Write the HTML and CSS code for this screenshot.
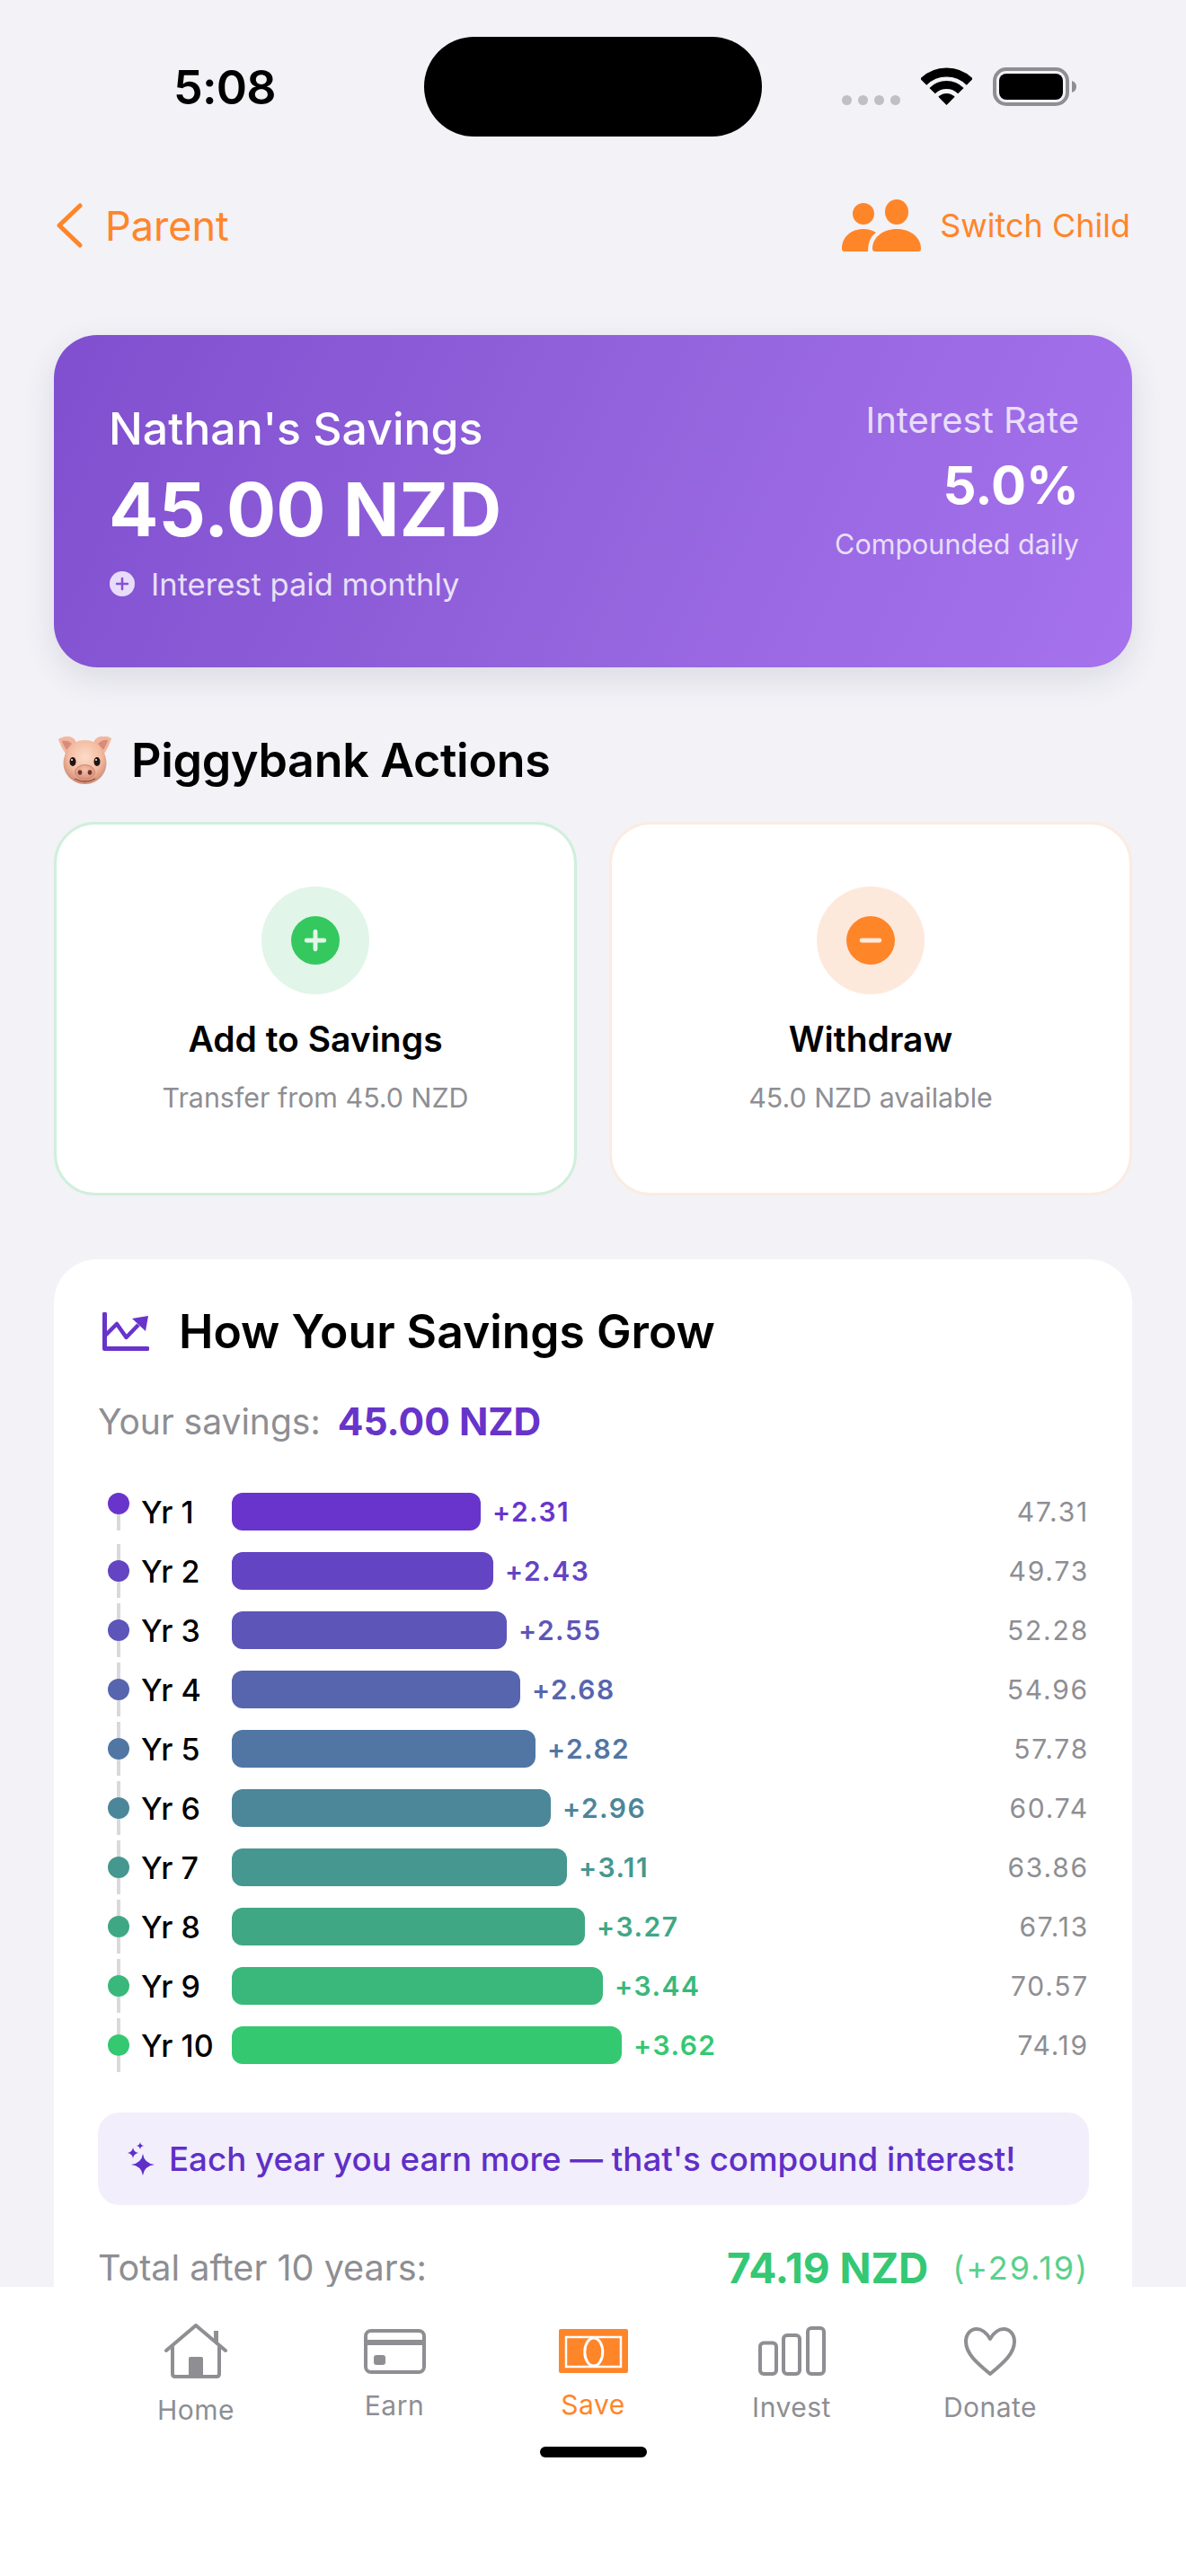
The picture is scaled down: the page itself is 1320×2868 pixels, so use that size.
FILE: index.html
```html
<!DOCTYPE html>
<html lang="en">
<head>
<meta charset="utf-8">
<title>Savings</title>
<link rel="stylesheet" href="styles.css">
</head>
<body>
<div class="phone">
  <div class="scroll">
    <header class="status">
      <span class="time">5:08</span>
      <div class="island"></div>
      <div class="status-icons">
        <div class="signal"><i></i><i></i><i></i><i></i></div>
        <svg class="wifi" viewBox="0 0 57 42"><path d="M2.7 16.2A36.5 36.5 0 0 1 54.3 16.2" fill="none" stroke="#000" stroke-width="10"/><path d="M12.6 26.1A22.5 22.5 0 0 1 44.4 26.1" fill="none" stroke="#000" stroke-width="9"/><path d="M19.3 32.8A13 13 0 0 1 37.7 32.8L28.5 42Z"/></svg>
        <svg class="battery" viewBox="0 0 93 43"><rect x="2" y="2" width="81" height="39" rx="13" fill="none" stroke="#8e8e93" stroke-width="4"/><rect x="7" y="7" width="71" height="29" rx="8"/><path d="M88 15c3 1 5 3 5 6.500s-2 5.500-5 6.500z" fill="#8e8e93"/></svg>
      </div>
    </header>

    <nav class="topnav">
      <div class="back">
        <svg class="chevron" viewBox="0 0 29 50"><path d="M26 3 3 25l23 22" fill="none" stroke="#ff8529" stroke-width="5" stroke-linecap="round" stroke-linejoin="round"/></svg>
        <span>Parent</span>
      </div>
      <div class="switch">
        <svg class="users" viewBox="0 0 88 58"><circle cx="24" cy="16" r="12"/><ellipse cx="61" cy="14" rx="13" ry="14"/><path d="M34 55C34 42 46 33 61 33S88 42 88 55Q88 58 85 58H37Q34 58 34 55Z"/><path d="M0 55C0 42 10 33 24 33C30 33 35 35 38 37C32 41 29 48 29 58H3Q0 58 0 55Z"/></svg>
        <span>Switch Child</span>
      </div>
    </nav>

    <section class="hero">
      <div class="hero-left">
        <div class="hero-name">Nathan's Savings</div>
        <div class="hero-amount">45.00 NZD</div>
        <div class="hero-note">
          <svg class="note-icon" viewBox="0 0 28 28"><circle cx="14" cy="14" r="14" fill="#e8dcfa"/><path d="M14 8v12M8 14h12" stroke="#8452d4" stroke-width="2.500" stroke-linecap="round"/></svg>
          <span>Interest paid monthly</span>
        </div>
      </div>
      <div class="hero-right">
        <div class="rate-label">Interest Rate</div>
        <div class="rate-value">5.0%</div>
        <div class="rate-note">Compounded daily</div>
      </div>
    </section>

    <h2 class="section-title">
      <svg class="pig" viewBox="0 0 59 53">
        <defs>
          <radialGradient id="pigface" cx="50%" cy="38%" r="62%"><stop offset="0" stop-color="#fcdcc9"/><stop offset="0.6" stop-color="#f4bda3"/><stop offset="1" stop-color="#cf8a72"/></radialGradient>
          <radialGradient id="pigsnout" cx="50%" cy="35%" r="70%"><stop offset="0" stop-color="#f6bfa8"/><stop offset="1" stop-color="#d98f7b"/></radialGradient>
        </defs>
        <path d="M0 3C5 0 11-1 15 1 19 3 20 6 20 9L8 19C5 15 2 9 0 3Z" fill="#f2b79f"/>
        <path d="M59 2C54-1 48-1 44 1 40 3 39 6 39 9L51 19C54 15 57 8 59 2Z" fill="#f2b79f"/>
        <path d="M4 5C8 4 12 5 15 8L9 15C7 12 5 8 4 5Z" fill="#d98c7a"/>
        <path d="M55 4C51 3 47 5 44 8L50 15C52 12 54 8 55 4Z" fill="#d98c7a"/>
        <path d="M29.500 4C44 4 51 15 53 25 56 40 44 53 29.500 53S3 40 6 25C8 15 15 4 29.500 4Z" fill="url(#pigface)"/>
        <ellipse cx="16" cy="28" rx="3.500" ry="5" fill="#1f1412"/><ellipse cx="43" cy="28" rx="3.500" ry="5" fill="#1f1412"/>
        <circle cx="15" cy="26" r="1" fill="#fff"/><circle cx="42" cy="26" r="1" fill="#fff"/>
        <ellipse cx="29.500" cy="39.500" rx="11" ry="8" fill="url(#pigsnout)" stroke="#c67e6b" stroke-width="0.800"/>
        <ellipse cx="24" cy="40" rx="2.300" ry="2.800" fill="#6d3529"/><ellipse cx="35" cy="40" rx="2.300" ry="2.800" fill="#6d3529"/>
        <path d="M18 47q11.500 6 23 0" fill="none" stroke="#8f4c3c" stroke-width="1.300"/>
      </svg>
      <span>Piggybank Actions</span>
    </h2>

    <div class="actions">
      <div class="action action-add">
        <div class="action-halo">
          <svg viewBox="0 0 66 66"><circle cx="33" cy="33" r="33" fill="#34c85f"/><path d="M33 21v24M21 33h24" stroke="#e2f6e8" stroke-width="6" stroke-linecap="round"/></svg>
        </div>
        <div class="action-title">Add to Savings</div>
        <div class="action-sub">Transfer from 45.0 NZD</div>
      </div>
      <div class="action action-out">
        <div class="action-halo">
          <svg viewBox="0 0 66 66"><circle cx="33" cy="33" r="33" fill="#ff8529"/><path d="M21 33h24" stroke="#fdeadd" stroke-width="6" stroke-linecap="round"/></svg>
        </div>
        <div class="action-title">Withdraw</div>
        <div class="action-sub">45.0 NZD available</div>
      </div>
    </div>

    <section class="grow">
      <div class="grow-head">
        <svg class="chart-icon" viewBox="0 0 52 43"><path d="M2.500 2v38.500H50" fill="none" stroke="#6734cb" stroke-width="5" stroke-linecap="round" stroke-linejoin="round"/><path d="M3 26 16 13l10.500 15L40 14" fill="none" stroke="#6734cb" stroke-width="4.500" stroke-linejoin="round"/><path d="M33 7 51 4l-3 17z" fill="#6734cb"/></svg>
        <h2>How Your Savings Grow</h2>
      </div>
      <div class="grow-sub"><span>Your savings:</span><strong>45.00 NZD</strong></div>

      <div class="rows">
        <div class="row" style="--c:#6934cc">
          <div class="spine"><i class="dot"></i><i class="line"></i></div>
          <div class="yr">Yr 1</div>
          <div class="bar" style="width:277px"></div><div class="gain">+2.31</div><div class="val">47.31</div>
        </div>
        <div class="row" style="--c:#6344c2">
          <div class="spine"><i class="line"></i><i class="dot"></i><i class="line"></i></div>
          <div class="yr">Yr 2</div>
          <div class="bar" style="width:291px"></div><div class="gain">+2.43</div><div class="val">49.73</div>
        </div>
        <div class="row" style="--c:#5d55b8">
          <div class="spine"><i class="line"></i><i class="dot"></i><i class="line"></i></div>
          <div class="yr">Yr 3</div>
          <div class="bar" style="width:306px"></div><div class="gain">+2.55</div><div class="val">52.28</div>
        </div>
        <div class="row" style="--c:#5765ae">
          <div class="spine"><i class="line"></i><i class="dot"></i><i class="line"></i></div>
          <div class="yr">Yr 4</div>
          <div class="bar" style="width:321px"></div><div class="gain">+2.68</div><div class="val">54.96</div>
        </div>
        <div class="row" style="--c:#5176a4">
          <div class="spine"><i class="line"></i><i class="dot"></i><i class="line"></i></div>
          <div class="yr">Yr 5</div>
          <div class="bar" style="width:338px"></div><div class="gain">+2.82</div><div class="val">57.78</div>
        </div>
        <div class="row" style="--c:#4c8699">
          <div class="spine"><i class="line"></i><i class="dot"></i><i class="line"></i></div>
          <div class="yr">Yr 6</div>
          <div class="bar" style="width:355px"></div><div class="gain">+2.96</div><div class="val">60.74</div>
        </div>
        <div class="row" style="--c:#46978f">
          <div class="spine"><i class="line"></i><i class="dot"></i><i class="line"></i></div>
          <div class="yr">Yr 7</div>
          <div class="bar" style="width:373px"></div><div class="gain">+3.11</div><div class="val">63.86</div>
        </div>
        <div class="row" style="--c:#40a785">
          <div class="spine"><i class="line"></i><i class="dot"></i><i class="line"></i></div>
          <div class="yr">Yr 8</div>
          <div class="bar" style="width:393px"></div><div class="gain">+3.27</div><div class="val">67.13</div>
        </div>
        <div class="row" style="--c:#3ab87b">
          <div class="spine"><i class="line"></i><i class="dot"></i><i class="line"></i></div>
          <div class="yr">Yr 9</div>
          <div class="bar" style="width:413px"></div><div class="gain">+3.44</div><div class="val">70.57</div>
        </div>
        <div class="row" style="--c:#34c871">
          <div class="spine"><i class="line"></i><i class="dot"></i><i class="line"></i></div>
          <div class="yr">Yr 10</div>
          <div class="bar" style="width:434px"></div><div class="gain">+3.62</div><div class="val">74.19</div>
        </div>
      </div>

      <div class="tip">
        <svg class="sparkle" viewBox="0 0 31 37" fill="#5f2fc8"><path d="M18 13q1.500 10.500 13 12-11.500 1.500-13 12-1.500-10.500-13-12 11.500-1.500 13-12Z"/><path d="M7 6q.7 5 6 6-5.300 1-6 6-.7-5-6-6 5.300-1 6-6Z"/><path d="M15 0q.5 3.500 4 4-3.500.5-4 4-.5-3.500-4-4 3.500-.5 4-4Z"/></svg>
        <span>Each year you earn more — that's compound interest!</span>
      </div>

      <div class="total">
        <span class="total-label">Total after 10 years:</span>
        <strong class="total-value">74.19 NZD</strong>
        <span class="total-gain">(+29.19)</span>
      </div>
    </section>
  </div>

  <footer class="tabbar">
    <div class="tabs">
      <div class="tab">
        <svg class="ic-home" viewBox="0 0 70 61"><g fill="none" stroke="#8e8e93" stroke-width="4" stroke-linecap="round" stroke-linejoin="round"><path d="M2 30 35 2l33 28"/><path d="M9 26v30q0 3 3 3h46q3 0 3-3V26"/></g><path d="M55 8h5v16l-5-4z" fill="#8e8e93"/><rect x="27" y="37" width="16" height="22" rx="2" fill="#8e8e93"/></svg>
        <span>Home</span>
      </div>
      <div class="tab">
        <svg class="ic-earn" viewBox="0 0 69 50"><rect x="2" y="2" width="65" height="46" rx="6" fill="none" stroke="#8e8e93" stroke-width="4"/><rect x="2" y="12" width="65" height="6" fill="#8e8e93"/><rect x="11" y="29" width="13" height="11" rx="3" fill="#8e8e93"/></svg>
        <span>Earn</span>
      </div>
      <div class="tab tab-on">
        <svg class="ic-save" viewBox="0 0 77 49"><rect width="77" height="49" rx="2" fill="#ff8529"/><rect x="8" y="9" width="61" height="33" fill="none" stroke="#fff" stroke-width="2.500"/><ellipse cx="38.800" cy="25.500" rx="10" ry="15.500" fill="none" stroke="#fff" stroke-width="3"/></svg>
        <span>Save</span>
      </div>
      <div class="tab">
        <svg class="ic-invest" viewBox="0 0 75 55"><g fill="none" stroke="#8e8e93" stroke-width="4"><rect x="2" y="18.500" width="18" height="34.500" rx="4"/><rect x="28" y="10" width="18" height="43" rx="4"/><rect x="55" y="2" width="18" height="51" rx="4"/></g></svg>
        <span>Invest</span>
      </div>
      <div class="tab">
        <svg class="ic-heart" viewBox="0 0 58 54"><path d="M29 13C25 6 19 2 14 2 7 2 2 8 2 16c0 14 14 25 27 36 13-11 27-22 27-36 0-8-5-14-12-14-5 0-11 4-15 11Z" fill="none" stroke="#8e8e93" stroke-width="4" stroke-linejoin="round"/></svg>
        <span>Donate</span>
      </div>
    </div>
    <div class="home-indicator"></div>
  </footer>
</div>
</body>
</html>
```

FILE: styles.css
```css
* { box-sizing: border-box; }
html, body { margin: 0; padding: 0; }
body { font-family: Inter, "Noto Sans", sans-serif; background: #f2f2f7; color: #000; }
h2 { margin: 0; font: inherit; }
i { display: block; }
svg { display: block; flex: none; }

.phone { width: 1320px; height: 2868px; display: flex; flex-direction: column; overflow: hidden; background: #f2f2f7; }
.scroll { flex: 1; min-height: 0; padding: 0 60px; }

/* status bar */
.status { height: 152px; padding-top: 41px; position: relative; display: flex; }
.time { position: absolute; left: 133px; top: 69px; font-size: 52px; line-height: 58px; font-weight: 600; letter-spacing: -0.8px; }
.island { width: 376px; height: 111px; margin-left: 412px; border-radius: 56px; background: #000; }
.status-icons { margin-left: 89px; padding-top: 34px; display: flex; align-items: flex-start; }
.signal { display: flex; gap: 7px; margin-top: 31px; }
.signal i { width: 11px; height: 11px; border-radius: 50%; background: #bfbfc4; }
.wifi { width: 57px; height: 42px; margin-left: 23px; }
.battery { width: 93px; height: 43px; margin-left: 23px; }

/* nav */
.topnav { margin-top: 70px; height: 58px; display: flex; justify-content: space-between; align-items: center; color: #ff8529; }
.back { display: flex; align-items: center; gap: 25px; margin-left: 3px; font-size: 45px; line-height: 56px; padding-top: 1px; }
.back .chevron { margin-top: -1px; }
.chevron { width: 29px; height: 50px; }
.switch { display: flex; align-items: center; gap: 21px; font-size: 36px; margin-right: 2px; }
.users { width: 88px; height: 58px; fill: #ff8529; }

/* hero */
.hero { margin-top: 93px; height: 370px; padding: 74px 59px 0 61px; border-radius: 48px; display: flex; justify-content: space-between; color: #fff; background: linear-gradient(115deg, #7f4fcf 0%, #9565de 55%, #a672ee 100%); box-shadow: 0 12px 36px rgba(60, 50, 90, 0.12); }
.hero-name { font-size: 50px; line-height: 60px; font-weight: 500; }
.hero-amount { margin-top: 11px; font-size: 82px; line-height: 100px; font-weight: 700; }
.hero-note { margin-top: 10px; height: 44px; padding-left: 1px; display: flex; align-items: center; gap: 18px; font-size: 34.5px; color: rgba(255, 255, 255, 0.82); }
.note-icon { width: 28px; height: 28px; }
.hero-right { text-align: right; }
.rate-label { font-size: 40px; line-height: 46px; margin-top: -2px; color: rgba(255, 255, 255, 0.78); }
.rate-value { margin-top: 14px; font-size: 58px; line-height: 70px; font-weight: 700; }
.rate-note { margin-top: 11px; font-size: 30.5px; line-height: 40px; color: rgba(255, 255, 255, 0.78); }

/* actions */
.section-title { margin-top: 70px; height: 66px; display: flex; align-items: center; gap: 22px; font-size: 52px; font-weight: 600; letter-spacing: -0.3px; padding-left: 5px; }
.pig { width: 59px; height: 53px; }
.actions { margin-top: 36px; display: grid; grid-template-columns: 1fr 1fr; gap: 36px; }
.action { height: 416px; padding-top: 69px; border: 3px solid; border-radius: 46px; background: #fff; display: flex; flex-direction: column; align-items: center; }
.action-add { border-color: #d0efdb; }
.action-out { border-color: #fcebe0; }
.action-halo { width: 120px; height: 120px; border-radius: 50%; display: flex; align-items: center; justify-content: center; }
.action-add .action-halo { background: #e1f5e8; }
.action-out .action-halo { background: #fde9dc; }
.action-halo svg { width: 54px; height: 54px; }
.action-title { margin-top: 25px; font-size: 39px; line-height: 50px; font-weight: 600; }
.action-sub { margin-top: 20px; font-size: 30.4px; line-height: 40px; color: #8e8e93; }

/* growth card runs on under the tab bar */
.grow { margin-top: 71px; padding: 47px 48px 60px 49px; border-radius: 48px; background: #fff; }
.grow-head { display: flex; align-items: center; gap: 33px; height: 66px; padding-left: 5px; }
.chart-icon { width: 52px; height: 43px; }
.grow-head h2 { font-size: 51.6px; font-weight: 600; }
.grow-sub { margin-top: 42px; height: 50px; display: flex; align-items: center; gap: 19px; font-size: 39px; color: #8e8e93; }
.grow-sub strong { font-size: 42.5px; font-weight: 700; color: #6734cb; }
.rows { margin-top: 46px; display: flex; flex-direction: column; gap: 6px; }
.row { height: 60px; display: flex; align-items: center; }
.spine { width: 24px; margin-left: 11px; display: flex; flex-direction: column; align-items: center; }
.line { width: 4px; height: 18px; background: #d9d9dd; }
.dot { width: 24px; height: 24px; border-radius: 50%; background: var(--c); }
.yr { width: 101px; margin-left: 13px; font-size: 34px; font-weight: 500; }
.bar { height: 42px; border-radius: 12px; background: var(--c); }
.gain { margin-left: 13px; font-size: 30px; font-weight: 600; letter-spacing: 1.5px; color: var(--c); }
.val { margin-left: auto; font-size: 30px; letter-spacing: 1.8px; color: #8e8e93; }

.tip { margin-top: 45px; height: 103px; padding-left: 32px; border-radius: 24px; background: #f2eefb; display: flex; align-items: center; gap: 16px; font-size: 36.7px; font-weight: 500; color: #5f2fc8; }
.sparkle { width: 31px; height: 37px; }

.total { margin-top: 40px; height: 60px; display: flex; align-items: center; line-height: 40px; }
.total-label { margin-right: auto; font-size: 39.6px; color: #8e8e93; }
.total-value { font-size: 46px; font-weight: 700; color: #34c874; }
.total-gain { margin-left: 27px; font-size: 36px; letter-spacing: 1.9px; color: #5ad08c; }

/* tab bar */
.tabbar { flex: none; position: relative; height: 322px; padding-top: 41px; background: #fff; display: flex; flex-direction: column; align-items: center; }
.tabs { width: 1105px; height: 114px; display: flex; align-items: center; }
.tab { width: 221px; display: flex; flex-direction: column; align-items: center; gap: 17px; font-size: 30px; line-height: 36px; letter-spacing: 0.5px; color: #8e8e93; }
.tab-on { color: #ff8529; }
.ic-home { width: 70px; height: 61px; }
.ic-earn { width: 69px; height: 50px; }
.ic-save { width: 77px; height: 49px; }
.ic-invest { width: 75px; height: 55px; }
.ic-heart { width: 58px; height: 54px; }
.home-indicator { width: 119px; height: 12px; margin-top: 23px; border-radius: 6px; background: #000; }
```
